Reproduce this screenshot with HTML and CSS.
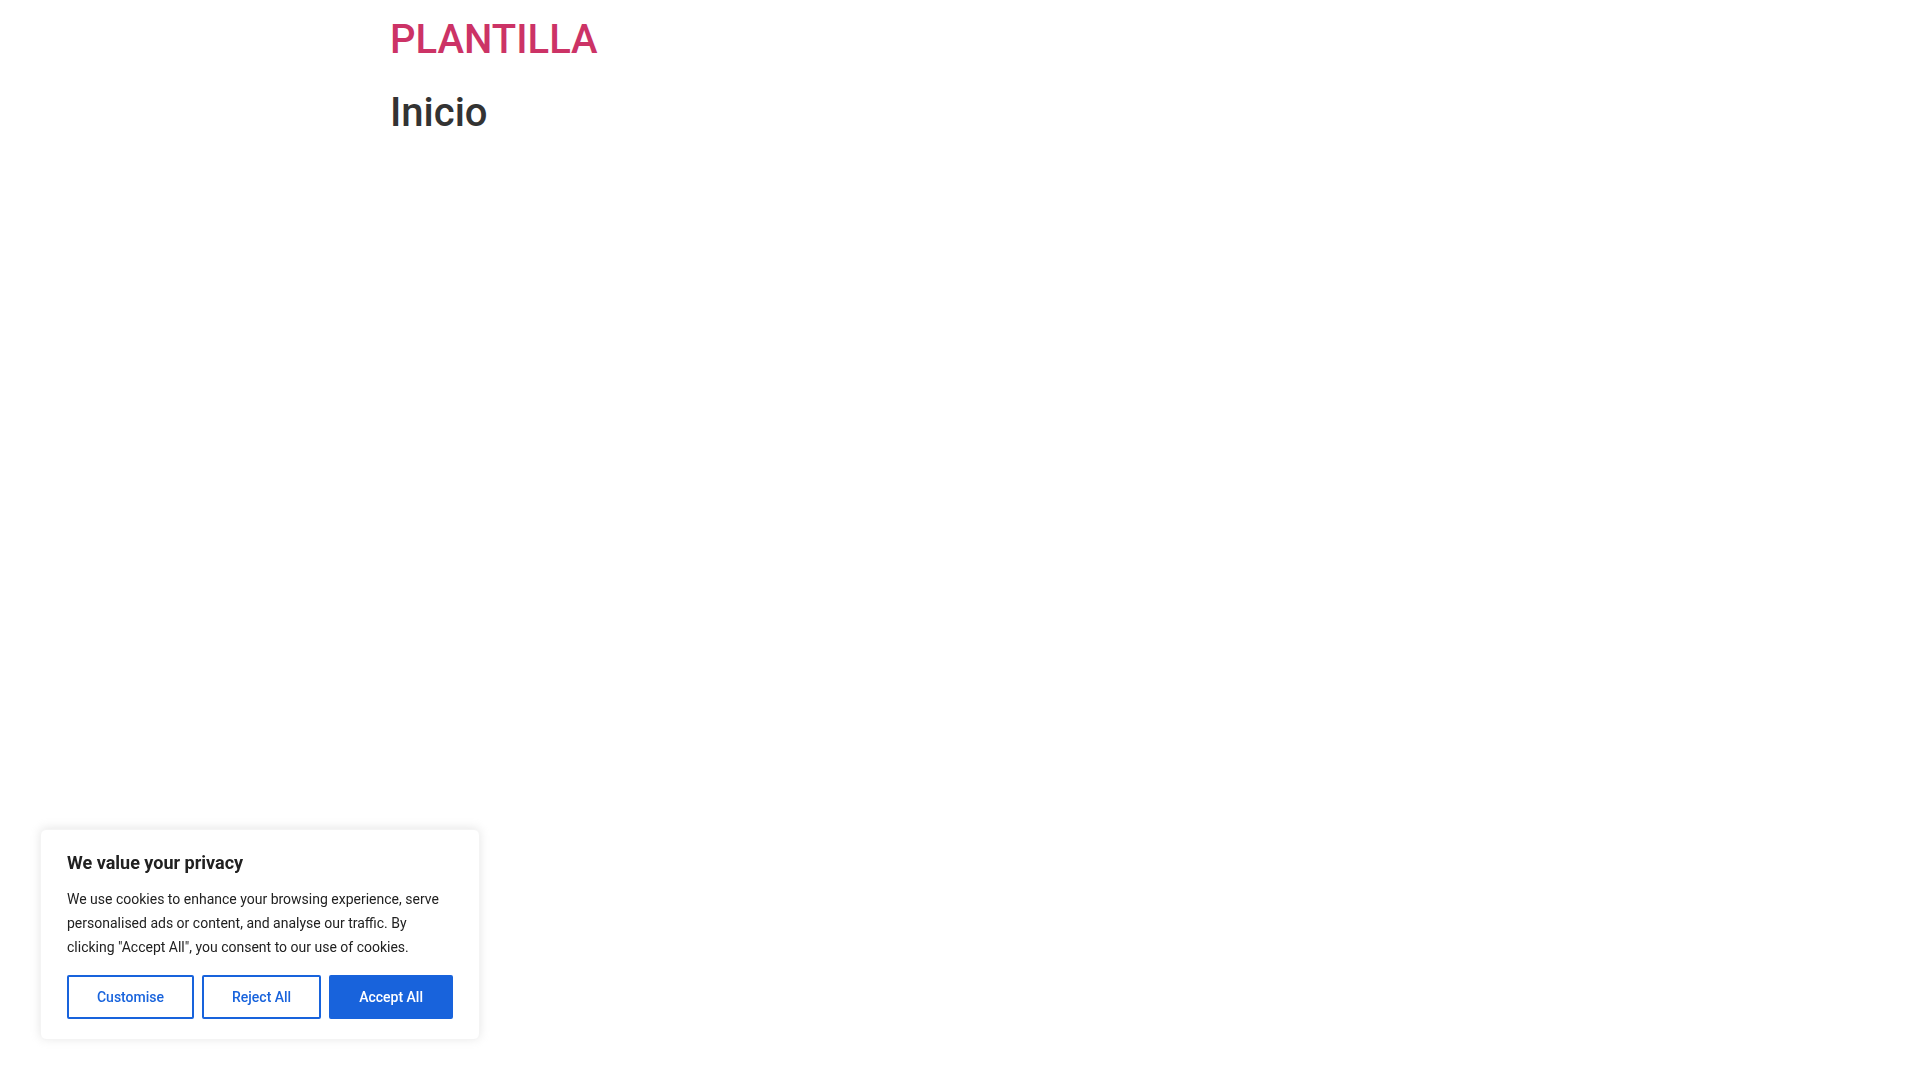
FILE: index.html
```html
<!DOCTYPE html>
<html lang="es">
<head>
<meta charset="utf-8">
<title>Inicio – PLANTILLA</title>
<link rel="stylesheet" href="styles.css">
</head>
<body>
<header class="site-header">
  <div class="site-title"><a href="#" class="site-link">PLANTILLA</a></div>
</header>
<main class="site-main">
  <div class="page-header">
    <h1 class="entry-title">Inicio</h1>
  </div>
</main>

<div class="cky-consent">
  <div class="cky-bar">
    <p class="cky-title">We value your privacy</p>
    <p class="cky-des">We use cookies to enhance your browsing experience, serve personalised ads or content, and analyse our traffic. By clicking "Accept All", you consent to our use of cookies.</p>
    <div class="cky-btns">
      <button class="cky-btn cky-btn-outline">Customise</button>
      <button class="cky-btn cky-btn-outline">Reject All</button>
      <button class="cky-btn cky-btn-accept">Accept All</button>
    </div>
  </div>
</div>
</body>
</html>
```
FILE: styles.css
```css
html, body {
  margin: 0;
  padding: 0;
  background: #fff;
}
body {
  font-family: Roboto, "Liberation Sans", Arial, sans-serif;
  color: #333;
}
.site-header {
  max-width: 1140px;
  margin: 0 auto;
  padding: 16px 0;
  display: flex;
}
.site-title {
  font-size: 40px;
  font-weight: 500;
  line-height: 1.2;
}
.site-link {
  color: #c36;
  text-decoration: none;
}
.site-main {
  max-width: 1140px;
  margin: 0 auto;
}
.entry-title {
  margin: 9px 0 8px;
  font-size: 40px;
  font-weight: 500;
  line-height: 1.2;
  color: #333;
}

.cky-consent {
  position: fixed;
  left: 40px;
  bottom: 40px;
  width: 440px;
  box-sizing: border-box;
  z-index: 10;
}
.cky-bar {
  background: #fff;
  border: 1px solid #f4f4f4;
  border-radius: 6px;
  padding: 20px 26px;
  box-shadow: 0 -1px 10px 0 rgba(172, 171, 171, 0.3);
}
.cky-title {
  margin: 0 0 12px;
  font-size: 18px;
  font-weight: 700;
  line-height: 1.4;
  color: #212121;
}
.cky-des {
  margin: 0;
  font-size: 14px;
  line-height: 24px;
  color: #212121;
}
.cky-btns {
  display: flex;
  flex-wrap: wrap;
  align-items: center;
  gap: 8px;
  margin-top: 16px;
}
.cky-btn {
  flex: auto;
  font-family: inherit;
  font-size: 14px;
  font-weight: 500;
  line-height: 24px;
  padding: 8px;
  border: 2px solid #1863dc;
  border-radius: 2px;
  text-align: center;
  cursor: pointer;
}
.cky-btn-outline {
  background: transparent;
  color: #1863dc;
}
.cky-btn-accept {
  background: #1863dc;
  color: #fff;
}
```
